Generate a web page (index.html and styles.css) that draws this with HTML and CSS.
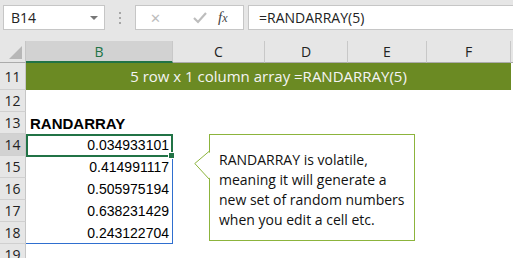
FILE: index.html
```html
<!DOCTYPE html>
<html lang="en">

<head>
  <meta charset="UTF-8">
  <title>RANDARRAY</title>
  <link rel="stylesheet" href="styles.css">
</head>

<body>
  <div class="toolbar">
    <div class="name-box">
      <span>B14</span>
      <span class="drop"></span>
    </div>
    <div class="grip">
      <span></span><span></span><span></span>
    </div>
    <div class="fx-box">
      <span class="cancel">&#x2715;</span>
      <svg class="check" width="14" height="12" viewBox="0 0 14 12">
        <polyline points="1,6 5,10 13,1" fill="none" stroke="#bdbdbd" stroke-width="2.2" />
      </svg>
      <span class="fx">f<i>x</i></span>
    </div>
    <div class="formula">=RANDARRAY(5)</div>
  </div>

  <div class="sheet">
    <div class="corner"></div>
    <div class="col-hdr col-b selected">B</div>
    <div class="col-hdr col-c">C</div>
    <div class="col-hdr col-d">D</div>
    <div class="col-hdr col-e">E</div>
    <div class="col-hdr col-f">F</div>
    <div class="col-hdr col-end"></div>

    <div class="row-hdr r11">11</div>
    <div class="row-hdr r12">12</div>
    <div class="row-hdr r13">13</div>
    <div class="row-hdr r14 selected">14</div>
    <div class="row-hdr r15">15</div>
    <div class="row-hdr r16">16</div>
    <div class="row-hdr r17">17</div>
    <div class="row-hdr r18">18</div>
    <div class="row-hdr r19">19</div>

    <div class="banner">5 row x 1 column array =RANDARRAY(5)</div>
    <div class="title">RANDARRAY</div>

    <div class="num r14">0.034933101</div>
    <div class="num r15">0.414991117</div>
    <div class="num r16">0.505975194</div>
    <div class="num r17">0.638231429</div>
    <div class="num r18">0.243122704</div>

    <div class="range"></div>
    <div class="active"><span class="handle"></span></div>

    <div class="callout">
      <svg class="pointer" width="17" height="30" viewBox="0 0 17 30">
        <polygon points="17,0.5 0.5,12.5 17,28.5" fill="#fff" />
        <polyline points="15.5,0 0.8,12.5 15.5,28.5" fill="none" stroke="#8cb43c" stroke-width="1" />
      </svg>
      RANDARRAY is volatile, meaning it will generate a new set of random numbers when you edit a cell etc.
    </div>
  </div>
</body>

</html>
```

FILE: styles.css
```css
body {
  margin: 0;
  width: 513px;
  height: 258px;
  overflow: hidden;
  background-color: #ffffff;
  font-family: "Open Sans", "Noto Sans", sans-serif;
  color: #000000;
}

/* formula bar */
.toolbar {
  display: flex;
  align-items: center;
  height: 41px;
  padding-left: 3px;
  background-color: #e6e6e6;
  box-sizing: border-box;
}

.name-box,
.fx-box,
.formula {
  height: 25px;
  box-sizing: border-box;
  background-color: #ffffff;
  border: 1px solid #c6c6c6;
  display: flex;
  align-items: center;
  margin-top: -6px;
}

.name-box {
  width: 102px;
  padding: 0 6px 0 7px;
  justify-content: space-between;
  font-size: 14px;
  color: #222222;
}

.drop {
  width: 0;
  height: 0;
  border-left: 4px solid transparent;
  border-right: 4px solid transparent;
  border-top: 4px solid #777777;
  margin-top: 1px;
}

.grip {
  width: 30px;
  display: flex;
  flex-direction: column;
  align-items: center;
  gap: 3px;
  margin-top: -6px;
}

.grip span {
  width: 2px;
  height: 2px;
  background-color: #a6a6a6;
}

.fx-box {
  width: 109px;
  padding: 0 0 0 14px;
}

.cancel {
  font-size: 13px;
  color: #bdbdbd;
  width: 32px;
}

.check {
  margin-left: 2px;
  width: 32px;
  height: 12px;
}

.fx {
  font-family: "Liberation Serif", serif;
  font-style: italic;
  font-size: 15px;
  color: #444444;
  margin-left: 2px;
}

.fx i {
  font-size: 12px;
}

.formula {
  flex: 1;
  margin-left: 4px;
  border-right: none;
  padding-left: 10px;
  font-size: 14px;
  color: #222222;
}

/* grid */
.sheet {
  display: grid;
  grid-template-columns: 26px 147px 92px 83px 79px 84px 2px;
  grid-template-rows: 22px 27px repeat(8, 22px);
  background-color: #ffffff;
}

.corner {
  grid-row: 1;
  grid-column: 1;
  background-color: #e6e6e6;
  border-bottom: 1px solid #ababab;
  border-right: 1px solid #c6c6c6;
  position: relative;
}

.corner::after {
  content: "";
  position: absolute;
  right: 3px;
  bottom: 3px;
  width: 0;
  height: 0;
  border-left: 13px solid transparent;
  border-bottom: 13px solid #b7b7b7;
}

.col-hdr {
  grid-row: 1;
  background-color: #e6e6e6;
  border-bottom: 1px solid #ababab;
  border-right: 1px solid #c8c8c8;
  display: flex;
  align-items: center;
  justify-content: center;
  font-size: 14px;
  color: #222222;
}

.col-hdr.selected {
  background-color: #d2d2d2;
  color: #217346;
  border-bottom: 2px solid #217346;
}

.col-b { grid-column: 2; }
.col-c { grid-column: 3; }
.col-d { grid-column: 4; }
.col-e { grid-column: 5; }
.col-f { grid-column: 6; }
.col-end { grid-column: 7; border-right: none; }

.row-hdr {
  grid-column: 1;
  background-color: #e6e6e6;
  border-bottom: 1px solid #d0d0d0;
  border-right: 1px solid #c6c6c6;
  display: flex;
  align-items: center;
  justify-content: center;
  font-size: 14px;
  color: #222222;
}

.row-hdr.selected {
  background-color: #d2d2d2;
}

.r11 { grid-row: 2; }
.r12 { grid-row: 3; }
.r13 { grid-row: 4; }
.r14 { grid-row: 5; }
.r15 { grid-row: 6; }
.r16 { grid-row: 7; }
.r17 { grid-row: 8; }
.r18 { grid-row: 9; }
.r19 { grid-row: 10; }

.banner {
  grid-row: 2;
  grid-column: 2 / 7;
  background-color: #6b8a23;
  color: #f4f4f4;
  font-size: 15px;
  display: flex;
  align-items: center;
  justify-content: center;
  padding-bottom: 2px;
}

.title {
  grid-row: 4;
  grid-column: 2;
  font-family: "Liberation Sans", Arial, sans-serif;
  font-weight: bold;
  font-size: 15px;
  display: flex;
  align-items: center;
  padding-left: 4px;
}

.num {
  grid-column: 2;
  font-family: "Liberation Sans", Arial, sans-serif;
  font-size: 14px;
  display: flex;
  align-items: center;
  justify-content: flex-end;
  padding-right: 4px;
}

.range {
  grid-row: 5 / 10;
  grid-column: 2;
  border: 1px solid #2f6fcf;
  border-left: none;
}

.active {
  grid-row: 5;
  grid-column: 2;
  border: 2px solid #217346;
  position: relative;
  margin-bottom: -1px;
}

.handle {
  position: absolute;
  right: -4px;
  bottom: -4px;
  width: 5px;
  height: 5px;
  background-color: #217346;
  border: 1px solid #ffffff;
}

.callout {
  grid-row: 5 / 10;
  grid-column: 3 / 6;
  margin: 0 12px 3px 36px;
  border: 1px solid #8cb43c;
  position: relative;
  padding: 15px 6px 0 9px;
  font-size: 14px;
  line-height: 20px;
  color: #111111;
}

.pointer {
  position: absolute;
  left: -16px;
  top: 16px;
}
```
